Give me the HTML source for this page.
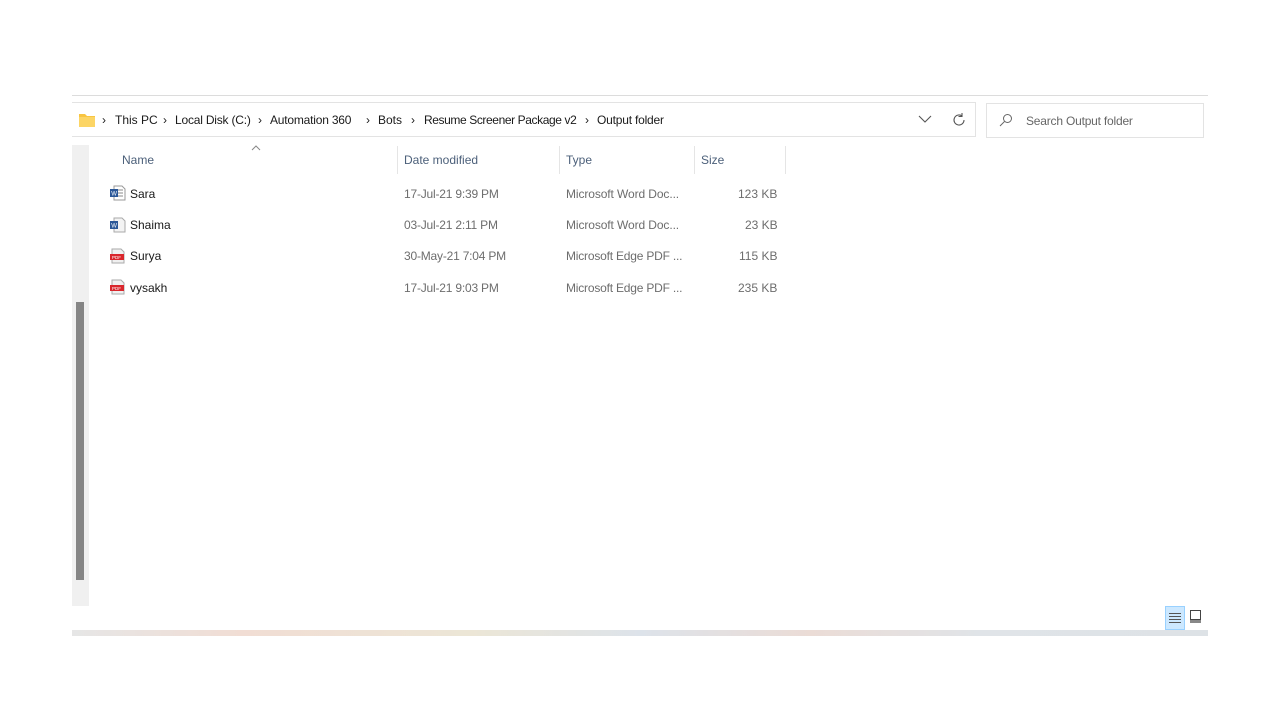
<!DOCTYPE html>
<html><head><style>
body{margin:0;width:1280px;height:720px;background:#fff;font-family:"Liberation Sans",sans-serif;position:relative;overflow:hidden}
.a{position:absolute}
.t{position:absolute;font-size:12px;white-space:nowrap}
.bc{color:#1a1a1a;top:113px}
.h{color:#4c607a}
.g{color:#6d6d6d}
.n{color:#1a1a1a}
.sep{position:absolute;top:146px;width:1px;height:28px;background:#e5e5e5}
</style></head><body>
<div class="a" style="left:72px;top:95px;width:1136px;height:1px;background:#dcdcdc"></div>
<div class="a" style="left:72px;top:102px;width:904px;height:35px;border:1px solid #e3e3e3;border-left:none;box-sizing:border-box"></div>
<div class="a" style="left:986px;top:103px;width:218px;height:35px;border:1px solid #e3e3e3;box-sizing:border-box"></div>
<svg class="a" style="left:79px;top:113px" width="16" height="14"><path d="M0 1h6l2 2h8v11H0z" fill="#f8c542"/><rect x="0" y="4" width="16" height="10" fill="#fcd565"/></svg>
<div class="t bc" style="left:102px">›</div><div class="t bc" style="left:115px">This PC</div>
<div class="t bc" style="left:163px">›</div><div class="t bc" style="left:175px;letter-spacing:-0.2px">Local Disk (C:)</div>
<div class="t bc" style="left:258px">›</div><div class="t bc" style="left:270px;letter-spacing:-0.2px">Automation 360</div>
<div class="t bc" style="left:366px">›</div><div class="t bc" style="left:378px">Bots</div>
<div class="t bc" style="left:411px">›</div><div class="t bc" style="left:424px;letter-spacing:-0.4px">Resume Screener Package v2</div>
<div class="t bc" style="left:585px">›</div><div class="t bc" style="left:597px;letter-spacing:-0.2px">Output folder</div>
<svg class="a" style="left:918px;top:114px" width="14" height="10"><path d="M1 2l6 6 6-6" fill="none" stroke="#555" stroke-width="1.1"/></svg>
<svg class="a" style="left:951px;top:112px" width="16" height="16"><path d="M13 8A5 5 0 1 1 11 4" fill="none" stroke="#555" stroke-width="1.1"/><path d="M11 1v3.5h-3.5" fill="none" stroke="#555" stroke-width="1.1"/></svg>
<svg class="a" style="left:999px;top:113px" width="14" height="14"><circle cx="8.5" cy="5.5" r="4" fill="none" stroke="#666"/><path d="M5.5 8.5L1 13" stroke="#666"/></svg>
<div class="t" style="left:1026px;top:114px;color:#666;letter-spacing:-0.2px">Search Output folder</div>
<div class="a" style="left:72px;top:145px;width:17px;height:461px;background:#f0f0f0"></div>
<div class="a" style="left:76px;top:302px;width:8px;height:278px;background:#858585"></div>
<svg class="a" style="left:251px;top:145px" width="10" height="6"><path d="M1 5l4-4 4 4" fill="none" stroke="#888"/></svg>
<div class="t h" style="left:122px;top:153px">Name</div>
<div class="t h" style="left:404px;top:153px">Date modified</div>
<div class="t h" style="left:566px;top:153px">Type</div>
<div class="t h" style="left:701px;top:153px">Size</div>
<div class="sep" style="left:397px"></div><div class="sep" style="left:559px"></div><div class="sep" style="left:694px"></div><div class="sep" style="left:785px"></div>
<svg class="a" style="left:109px;top:185px" width="17" height="16"><path d="M5 1h8l3 3v11H5z" fill="#fff" stroke="#999"/><path d="M8 5h6M8 8h6M8 11h6" stroke="#888"/><rect x="1" y="4" width="8" height="8" fill="#2b5797"/><text x="2.3" y="10.5" font-size="6" fill="#fff" font-family="Liberation Sans">W</text></svg>
<svg class="a" style="left:109px;top:217px" width="17" height="16"><path d="M5 1h8l3 3v11H5z" fill="#f3f3f3" stroke="#aaa"/><rect x="1" y="4" width="8" height="8" fill="#2b5797"/><text x="2.3" y="10.5" font-size="6" fill="#fff" font-family="Liberation Sans">W</text></svg>
<svg class="a" style="left:109px;top:248px" width="17" height="16"><path d="M3 1h9l3 3v11H3z" fill="#f0f0f0" stroke="#aaa"/><rect x="1" y="6" width="14" height="6" fill="#d9262c"/><text x="3" y="11" font-size="4.5" fill="#fff" font-family="Liberation Sans">PDF</text></svg>
<svg class="a" style="left:109px;top:279px" width="17" height="16"><path d="M3 1h9l3 3v11H3z" fill="#f0f0f0" stroke="#aaa"/><rect x="1" y="6" width="14" height="6" fill="#d9262c"/><text x="3" y="11" font-size="4.5" fill="#fff" font-family="Liberation Sans">PDF</text></svg>
<div class="t n" style="left:130px;top:187px">Sara</div>
<div class="t g" style="left:404px;top:187px;letter-spacing:-0.2px">17-Jul-21 9:39 PM</div>
<div class="t g" style="left:566px;top:187px;letter-spacing:-0.1px">Microsoft Word Doc...</div>
<div class="t g" style="left:738px;top:187px">123 KB</div>
<div class="t n" style="left:130px;top:218px">Shaima</div>
<div class="t g" style="left:404px;top:218px;letter-spacing:-0.2px">03-Jul-21 2:11 PM</div>
<div class="t g" style="left:566px;top:218px;letter-spacing:-0.1px">Microsoft Word Doc...</div>
<div class="t g" style="left:745px;top:218px">23 KB</div>
<div class="t n" style="left:130px;top:249px">Surya</div>
<div class="t g" style="left:404px;top:249px;letter-spacing:-0.2px">30-May-21 7:04 PM</div>
<div class="t g" style="left:566px;top:249px;letter-spacing:-0.2px">Microsoft Edge PDF ...</div>
<div class="t g" style="left:739px;top:249px">115 KB</div>
<div class="t n" style="left:130px;top:281px">vysakh</div>
<div class="t g" style="left:404px;top:281px;letter-spacing:-0.2px">17-Jul-21 9:03 PM</div>
<div class="t g" style="left:566px;top:281px;letter-spacing:-0.2px">Microsoft Edge PDF ...</div>
<div class="t g" style="left:738px;top:281px">235 KB</div>
<div class="a" style="left:1165px;top:606px;width:20px;height:24px;background:#cce8ff;border:1px solid #99d1ff;box-sizing:border-box"></div>
<svg class="a" style="left:1169px;top:612px" width="12" height="12"><path d="M0 1.5h12M0 4.5h12M0 7.5h12M0 10.5h12" stroke="#555"/></svg>
<svg class="a" style="left:1189px;top:610px" width="13" height="14"><rect x="1.5" y="0.5" width="10" height="9" fill="none" stroke="#444"/><rect x="1" y="10" width="11" height="3" fill="#888"/></svg>
<div class="a" style="left:72px;top:630px;width:1136px;height:6px;background:linear-gradient(90deg,#e6e6e6,#f1ddd4 15%,#ece6d6 35%,#dde3ea 50%,#ebdcd6 65%,#e0e4e8 80%,#dde2e6)"></div>
</body></html>
